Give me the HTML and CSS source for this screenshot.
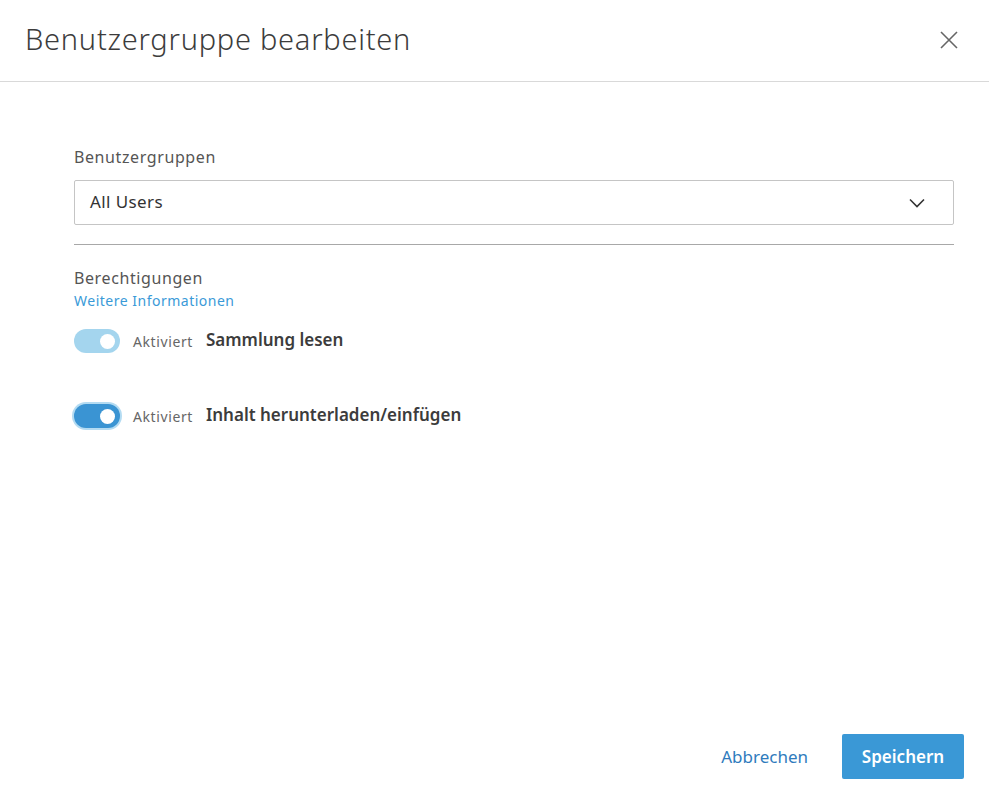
FILE: index.html
```html
<!DOCTYPE html>
<html lang="de">
<head>
<meta charset="utf-8">
<title>Benutzergruppe bearbeiten</title>
<link rel="stylesheet" href="styles.css">
</head>
<body>
<div class="dialog">
  <header class="header">
    <h1 class="title">Benutzergruppe bearbeiten</h1>
    <button class="close" aria-label="Schließen">
      <svg width="20" height="20" viewBox="0 0 20 20"><path d="M2 2 L18 18 M18 2 L2 18" stroke="#666" stroke-width="1.6" fill="none"/></svg>
    </button>
  </header>
  <main class="body">
    <label class="label">Benutzergruppen</label>
    <div class="select">
      <span>All Users</span>
      <svg width="16" height="10" viewBox="0 0 16 10"><path d="M1 1.5 L8 8.5 L15 1.5" stroke="#333" stroke-width="1.6" fill="none"/></svg>
    </div>
    <hr class="divider">
    <div class="label perm">Berechtigungen</div>
    <a class="link" href="#">Weitere Informationen</a>
    <div class="row">
      <span class="toggle light"><span class="knob"></span></span>
      <span class="state">Aktiviert</span>
      <span class="name">Sammlung lesen</span>
    </div>
    <div class="row second">
      <span class="toggle on focus"><span class="knob"></span></span>
      <span class="state">Aktiviert</span>
      <span class="name">Inhalt herunterladen/einfügen</span>
    </div>
  </main>
  <footer class="footer">
    <button class="btn cancel">Abbrechen</button>
    <button class="btn save">Speichern</button>
  </footer>
</div>
</body>
</html>
```
FILE: styles.css
```css
html, body { margin: 0; padding: 0; background: #fff; }
body { font-family: "Noto Sans", "Open Sans", sans-serif; color: #3c3c3c; }
.dialog { width: 989px; height: 797px; display: flex; flex-direction: column; }
.header { height: 82px; border-bottom: 1px solid #d9d9d9; display: flex; align-items: center; justify-content: space-between; padding: 0 30px 0 25px; box-sizing: border-box; flex: none; }
.title { margin: 0; font-weight: 300; font-size: 29px; color: #3c3c3c; letter-spacing: 0.75px; line-height: 1; padding-bottom: 4px; }
.close { border: 0; background: none; padding: 0; width: 20px; height: 20px; cursor: pointer; margin-bottom: 2px; }
.body { flex: 1; padding: 63px 35px 0 74px; display: flex; flex-direction: column; align-items: flex-start; }
.label { font-size: 16px; color: #555; line-height: 24px; letter-spacing: 0.6px; }
.select { margin-top: 11px; width: 880px; height: 45px; box-sizing: border-box; border: 1px solid #c5c5c5; border-radius: 2px; display: flex; align-items: center; justify-content: space-between; padding: 0 28px 0 15px; font-size: 17px; color: #333; letter-spacing: 0.4px; }
.select span { margin-top: -2px; }
.divider { width: 880px; margin: 19px 0 0 0; border: 0; border-top: 1px solid #a8a8a8; height: 0; }
.perm { margin-top: 21px; }
.link { font-size: 14px; color: #3a9ad8; text-decoration: none; line-height: 22px; letter-spacing: 0.5px; }
.row { display: flex; align-items: center; margin-top: 17px; height: 24px; }
.row.second { margin-top: 51px; }
.toggle { width: 46px; height: 24px; border-radius: 12px; box-sizing: border-box; position: relative; flex: none; }
.toggle.light { background: #a4d5ee; }
.toggle.on { background: #3a94d3; }
.toggle.focus { box-shadow: 0 0 0 2px #b3dbf2; }
.knob { position: absolute; width: 15px; height: 15px; border-radius: 50%; background: #fff; right: 5px; top: 4.5px; }
.state { margin-left: 13px; font-size: 14px; color: #666; letter-spacing: 0.6px; }
.name { margin-left: 13px; font-size: 17px; font-weight: 600; color: #3c3c3c; margin-top: -3px; }
.footer { flex: none; display: flex; justify-content: flex-end; align-items: center; padding: 0 25px 18px 0; gap: 20px; }
.btn { font-family: inherit; font-size: 17px; border: 0; cursor: pointer; height: 45px; border-radius: 2px; }
.cancel { background: none; color: #2f7bbd; padding: 0 14px; }
.save { background: #3a98d6; color: #fff; font-weight: 600; padding: 0 19px; width: 122px; }
```
